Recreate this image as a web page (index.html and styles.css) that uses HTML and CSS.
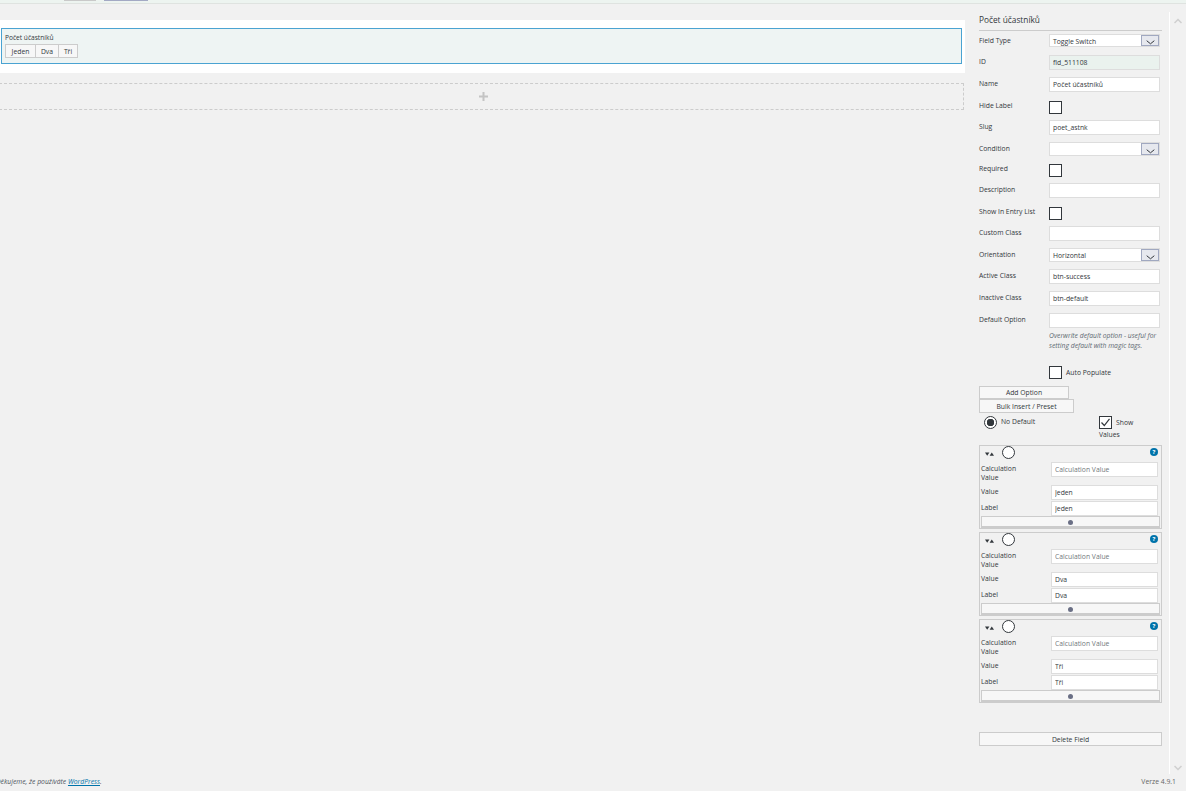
FILE: index.html
```html
<!DOCTYPE html>
<html lang="cs">
<head>
<meta charset="utf-8">
<title>Počet účastníků</title>
<link rel="stylesheet" href="styles.css">
</head>
<body>
<div class="topbar"><span class="tab tab-grey"></span><span class="tab tab-blue"></span></div>
<div class="content">
  <main class="main">
    <section class="panel">
      <div class="field-box">
        <div class="field-label">Počet účastníků</div>
        <div class="toggle"><span class="tbtn t1">Jeden</span><span class="tbtn t2">Dva</span><span class="tbtn t3">Tři</span></div>
      </div>
    </section>
    <div class="dropzone"><svg class="plus" width="9" height="9" viewBox="0 0 9 9"><path d="M3.5 0h2v3.500h3.500v2h-3.500v3.500h-2v-3.500h-3.500v-2h3.500z"/></svg></div>
  </main>
  <aside class="side">
    <h2 class="title">Počet účastníků</h2>
    <div class="row row-first"><label>Field Type</label><div class="select select-first"><span>Toggle Switch</span><i class="arrow"><svg width="9" height="5" viewBox="0 0 9 5"><path d="M.7.700 4.500 3.800 8.300.700"/></svg></i></div></div>
    <div class="row"><label>ID</label><input class="inp readonly" value="fld_511108" readonly></div>
    <div class="row"><label>Name</label><input class="inp" value="Počet účastníků"></div>
    <div class="row rowc"><label>Hide Label</label><span class="check"></span></div>
    <div class="row"><label>Slug</label><input class="inp" value="poet_astnk"></div>
    <div class="row row-sel"><label>Condition</label><div class="select"><span></span><i class="arrow"><svg width="9" height="5" viewBox="0 0 9 5"><path d="M.7.700 4.500 3.800 8.300.700"/></svg></i></div></div>
    <div class="row rowc"><label>Required</label><span class="check"></span></div>
    <div class="row"><label>Description</label><input class="inp"></div>
    <div class="row rowc"><label>Show In Entry List</label><span class="check"></span></div>
    <div class="row"><label>Custom Class</label><input class="inp"></div>
    <div class="row"><label>Orientation</label><div class="select"><span>Horizontal</span><i class="arrow"><svg width="9" height="5" viewBox="0 0 9 5"><path d="M.7.700 4.500 3.800 8.300.700"/></svg></i></div></div>
    <div class="row"><label>Active Class</label><input class="inp" value="btn-success"></div>
    <div class="row"><label>Inactive Class</label><input class="inp" value="btn-default"></div>
    <div class="row"><label>Default Option</label><div class="stack"><input class="inp"><p class="help">Overwrite default option - useful for setting default with magic tags.</p></div></div>
    <div class="auto"><span class="check"></span><span class="auto-text">Auto Populate</span></div>
    <div class="btn btn-add">Add Option</div>
    <div class="btn btn-bulk">Bulk Insert / Preset</div>
    <div class="defaults">
      <div class="nodef"><span class="radio on"></span><span>No Default</span></div>
      <div class="showv"><span class="check checked"><svg width="11" height="11" viewBox="0 0 11 11"><path d="M1.500 5.500 4.300 8.500 9.500 1.800"/></svg></span><span class="showv-t">Show</span><span class="showv-b">Values</span></div>
    </div>
    <div class="opt">
      <div class="opt-head"><svg class="sort" width="9" height="4" viewBox="0 0 9 4"><path d="M0 .5h4.400L2.200 3.700z"/><path d="M4.600 3.700 6.800.5 9 3.700z"/></svg><span class="radio"></span><span class="q">?</span></div>
      <div class="opt-row calc"><label>Calculation Value</label><input class="oinp" placeholder="Calculation Value"></div>
      <div class="opt-row val"><label>Value</label><input class="oinp" value="Jeden"></div>
      <div class="opt-row lab"><label>Label</label><input class="oinp" value="Jeden"></div>
      <div class="rm"><span class="dot"></span></div>
    </div>
    <div class="opt">
      <div class="opt-head"><svg class="sort" width="9" height="4" viewBox="0 0 9 4"><path d="M0 .5h4.400L2.200 3.700z"/><path d="M4.600 3.700 6.800.5 9 3.700z"/></svg><span class="radio"></span><span class="q">?</span></div>
      <div class="opt-row calc"><label>Calculation Value</label><input class="oinp" placeholder="Calculation Value"></div>
      <div class="opt-row val"><label>Value</label><input class="oinp" value="Dva"></div>
      <div class="opt-row lab"><label>Label</label><input class="oinp" value="Dva"></div>
      <div class="rm"><span class="dot"></span></div>
    </div>
    <div class="opt">
      <div class="opt-head"><svg class="sort" width="9" height="4" viewBox="0 0 9 4"><path d="M0 .5h4.400L2.200 3.700z"/><path d="M4.600 3.700 6.800.5 9 3.700z"/></svg><span class="radio"></span><span class="q">?</span></div>
      <div class="opt-row calc"><label>Calculation Value</label><input class="oinp" placeholder="Calculation Value"></div>
      <div class="opt-row val"><label>Value</label><input class="oinp" value="Tři"></div>
      <div class="opt-row lab"><label>Label</label><input class="oinp" value="Tři"></div>
      <div class="rm"><span class="dot"></span></div>
    </div>
    <div class="btn btn-del">Delete Field</div>
  </aside>
  <div class="scroll">
    <svg width="8" height="6" viewBox="0 0 8 6"><path d="M.500 5 4 1.500 7.500 5"/></svg>
    <svg width="8" height="6" viewBox="0 0 8 6"><path d="M.500 1 4 4.500 7.500 1"/></svg>
  </div>
</div>
<footer class="footer">
  <em class="thanks">Děkujeme, že používáte <a href="#">WordPress</a>.</em>
  <span class="version">Verze 4.9.1</span>
</footer>
</body>
</html>
```
FILE: styles.css
```css
* { box-sizing: border-box; }
html, body { margin: 0; height: 791px; overflow: hidden; }
body { width: 1186px; background: #f1f1f1; color: #32373c; font: 6.800px/1.3 "Open Sans", "Noto Sans", sans-serif; display: flex; flex-direction: column; }
.topbar { height: 4px; flex: none; background: #edf4f0; border-bottom: 1px solid #dfe3e0; display: flex; align-items: flex-start; padding-left: 64px; }
.tab { display: block; height: 1px; }
.tab-grey { width: 32px; background: #c9c9c9; }
.tab-blue { width: 44px; margin-left: 8px; background: #a3a9c4; }
.content { flex: 1; display: flex; min-height: 0; }
.main { width: 965px; flex: none; padding-top: 16px; }
.panel { background: #fff; height: 53px; padding: 8px 3px 0 0; }
.field-box { height: 36px; margin-left: 1px; background: #eef4f3; border: 1px solid #4aa3d2; padding: 4px 0 0 3px; }
.field-label { line-height: 9px; height: 11px; font-size: 6.600px; }
.toggle { display: flex; }
.tbtn { height: 14px; line-height: 13px; border: 1px solid #ccc; background: #f7f7f7; text-align: center; }
.t1 { width: 31px; }
.t2 { width: 24px; margin-left: -1px; }
.t3 { width: 20px; margin-left: -1px; }
.dropzone { height: 27px; margin: 10px 0 0 -1px; width: 965px; border: 1px dashed #ccc; display: flex; align-items: center; justify-content: center; padding-left: 3px; }
.plus { fill: #c4c4c4; }
.side { width: 183px; flex: none; margin-left: 14px; padding-top: 11px; }
.title { margin: 0; font-size: 8.300px; font-weight: 400; line-height: 10px; height: 16px; border-bottom: 1px solid #ccc; }
.row { display: flex; margin-bottom: 7px; padding-right: 2px; }
.row-first { margin-top: 3px; margin-bottom: 8px; }
.row-sel { margin-bottom: 6px; }
.row label { width: 70px; flex: none; line-height: 9px; padding-top: 2px; }
.rowc { padding-top: 2px; margin-bottom: 6px; }
.row.rowc label { padding-top: 0; }
.inp { display: block; width: 111px; height: 15px; border: 1px solid #ddd; background: #fff; padding: 0 3px; font: inherit; color: #32373c; border-radius: 0; outline: 0; }
.readonly { background: #eaf2ee; }
.select { width: 111px; height: 14px; border: 1px solid #ddd; background: #fff; display: flex; padding-left: 3px; line-height: 13px; }
.select-first { height: 13px; }
.select span { flex: 1; }
.arrow { display: flex; align-items: flex-end; justify-content: center; width: 18px; background: #e6e8ee; border: 1px solid #a0a8c0; font-style: normal; }
.arrow svg { fill: none; stroke: #32373c; stroke-width: 1; }
.check { display: block; width: 13px; height: 13px; background: #fff; border: 1px solid #32373c; flex: none; }
.checked { display: flex; align-items: center; justify-content: center; }
.checked svg { fill: none; stroke: #32373c; stroke-width: 1.200; }
.stack { width: 111px; }
.help { margin: 3px 0 0; font-style: italic; line-height: 10px; color: #5e6a72; width: 111px; }
.auto { display: flex; align-items: center; margin: 15px 0 7px 70px; gap: 4px; }
.auto-text { margin-top: 1px; }
.btn { height: 14px; border: 1px solid #ccc; background: #f7f7f7; text-align: center; line-height: 13px; }
.btn-add { width: 90px; height: 13px; line-height: 12px; }
.btn-bulk { width: 95px; }
.btn-del { margin-top: 29px; }
.defaults { display: flex; height: 29px; margin-top: 3px; }
.nodef { width: 120px; padding-left: 5px; display: flex; gap: 4px; }
.nodef span:last-child { line-height: 11px; }
.radio { display: block; flex: none; width: 13px; height: 13px; border-radius: 50%; border: 1px solid #32373c; background: #fff; }
.on { background: radial-gradient(circle, #32373c 0 3.500px, #fff 4px); }
.showv { display: grid; grid-template-columns: 13px auto; column-gap: 4px; align-content: start; }
.showv-t { line-height: 13px; }
.showv-b { grid-column: 1 / 3; line-height: 9px; margin-top: 1px; }
.opt { height: 84px; border: 1px solid #ccc; margin-bottom: 3px; padding: 0 1px; }
.opt-head { display: flex; height: 14px; align-items: flex-start; padding-left: 4px; }
.sort { display: block; margin: 6px 8px 0 0; fill: #32373c; flex: none; }
.q { margin-left: auto; margin-right: 2px; margin-top: 2px; width: 8px; height: 8px; border-radius: 50%; background: #0073aa; color: #fff; font-size: 6px; line-height: 8px; text-align: center; font-weight: 700; }
.opt-row { display: flex; }
.opt-row label { width: 70px; padding: 2px 22px 0 0; line-height: 9px; flex: none; }
.calc { height: 23px; margin-top: 2px; }
.val { height: 16px; }
.lab { height: 15px; }
.oinp { display: block; width: 107px; height: 15px; border: 1px solid #ddd; background: #fff; padding: 0 3px; font: inherit; color: #32373c; outline: 0; }
.oinp::placeholder { color: #72777c; opacity: 1; }
.rm { height: 12px; width: 179px; padding-top: 1px; border: 1px solid #ccc; border-bottom-width: 2px; background: #f7f7f7; display: flex; align-items: center; justify-content: center; }
.dot { width: 5px; height: 5px; border-radius: 50%; background: #6a6f85; }
.scroll { width: 17px; margin-left: 7px; margin-top: 8px; margin-bottom: 1px; border-left: 1px solid #fff; display: flex; flex-direction: column; justify-content: space-between; align-items: center; padding: 6px 0 3px; flex: none; }
.scroll svg { fill: none; stroke: #cfcfcf; stroke-width: 1.500; }
.footer { height: 16px; flex: none; display: flex; justify-content: space-between; padding: 1px 10px 0 0; line-height: 12px; color: #50575e; }
.thanks { margin-left: -4px; }
.thanks a { color: #0073aa; }
.version { color: #666; }
```
